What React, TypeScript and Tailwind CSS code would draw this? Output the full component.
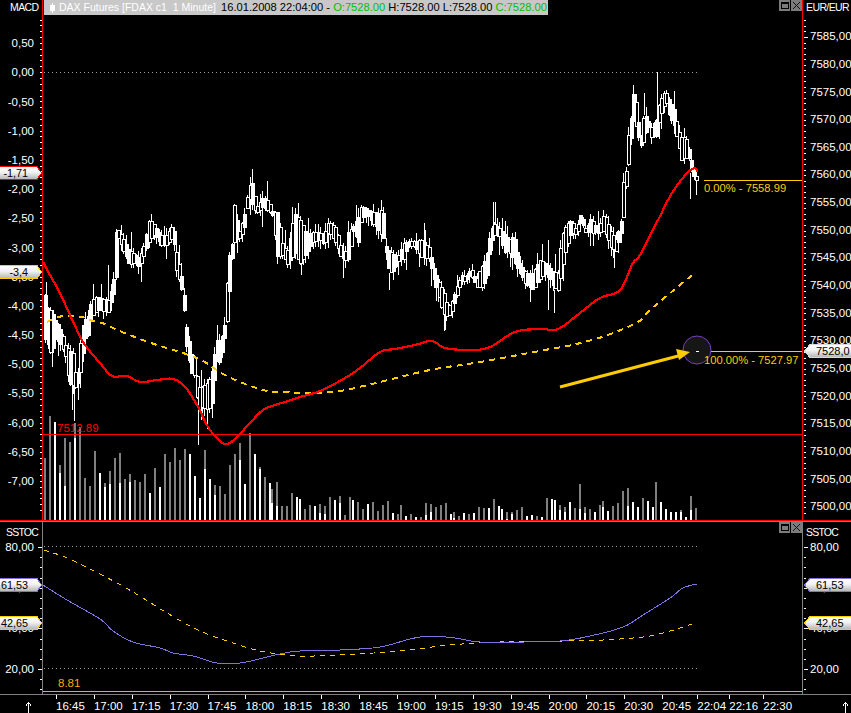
const RED = "#ff0000";

// screen-space points of the indicator curves
const redLine = "43,262 50,275 60,293 70,315 77,330 85,345 100,363 112,376 127,376 140,382 157,380 173,379 185,387 197,405 210,430 225,444 237,437 248,425 263,410 275,405 285,402 300,397 320,391 345,378 360,368 380,352 395,349 415,345 432,341 445,348 470,350 490,347 515,332 541,329 558,329 580,313 600,298 620,290 633,263 640,255 658,220 672,193 687,173 695,168 697,172";
const maLine = "47,322 58,317 70,316 82,317 93,321 105,324 115,329 127,334 148,342 170,349 183,353 203,361 223,374 245,384 267,391 280,392 310,393 340,391 380,382 430,370 480,362 545,350 572,345 605,336 638,322 650,310 680,285 695,273";
const stochK = "43,585 67,600 100,619 113,631 133,642 160,648 173,653 193,656 217,663 240,663 263,658 280,654 300,651 340,650 380,647 410,639 430,636 455,638 480,642 520,642 560,641 590,636 623,627 643,615 670,598 683,588 697,584";
const stochD = "44,550 67,558 100,574 133,592 167,613 200,631 233,643 260,651 280,654 300,656 340,655 400,651 450,645 500,642 560,641 603,640 643,637 667,632 695,623";

// catmull-rom through the read-off points so the curves don't look like straight segments
function smooth(points: string) {
  const p = points.split(" ").map((s) => s.split(",").map(Number));
  const out: string[] = [];
  for (let i = 0; i < p.length - 1; i++) {
    const a = p[Math.max(i - 1, 0)];
    const b = p[i];
    const c = p[i + 1];
    const d = p[Math.min(i + 2, p.length - 1)];
    const steps = Math.max(2, Math.round((c[0] - b[0]) / 2));
    for (let s = 0; s < steps; s++) {
      const t = s / steps;
      const f = (k: number) =>
        0.5 * (2 * b[k] + (c[k] - a[k]) * t + (2 * a[k] - 5 * b[k] + 4 * c[k] - d[k]) * t * t + (3 * b[k] - a[k] - 3 * c[k] + d[k]) * t * t * t);
      out.push(`${f(0).toFixed(1)},${f(1).toFixed(1)}`);
    }
  }
  out.push(p[p.length - 1].join(","));
  return out.join(" ");
}

// x, body top, body bottom read off the chart
const bodyKeys: number[][] = [
  [44, 295, 340], [47, 310, 345], [50, 310, 355], [54, 320, 340], [60, 330, 345], [64, 345, 355], [68, 350, 385], [72, 353, 385], [75, 378, 388], [78, 370, 382], [80, 330, 367], [84, 320, 340], [88, 315, 335], [90, 300, 317], [95, 297, 312], [100, 298, 310], [107, 300, 312], [112, 283, 295], [114, 233, 290], [117, 230, 238], [122, 238, 250], [128, 250, 265], [133, 253, 262], [138, 258, 268], [143, 245, 255], [148, 218, 240], [153, 225, 235], [160, 235, 245], [165, 235, 245], [172, 225, 238], [175, 250, 268], [178, 265, 280], [182, 283, 297], [185, 325, 345], [190, 353, 373], [193, 357, 375], [197, 387, 410], [201, 387, 407], [207, 382, 410], [211, 370, 403], [215, 340, 362], [219, 340, 363], [223, 330, 340],
  [225, 293, 330], [228, 257, 297], [231, 243, 257], [233, 203, 243], [238, 232, 238], [243, 217, 232], [246, 197, 208], [249, 183, 197], [252, 183, 208], [255, 208, 213], [262, 197, 208], [267, 200, 210], [272, 213, 217], [276, 210, 257], [282, 247, 255], [287, 250, 265], [293, 213, 253], [299, 220, 263], [306, 235, 253], [312, 232, 242], [318, 232, 238], [323, 235, 247], [327, 222, 232], [335, 227, 242], [340, 247, 257], [344, 255, 260], [347, 232, 260], [352, 226, 232], [357, 217, 243], [360, 205, 218], [367, 210, 217], [377, 213, 230], [382, 208, 237], [385, 248, 254], [388, 250, 272], [393, 255, 272], [398, 255, 260], [402, 243, 260], [407, 241, 246], [413, 241, 246], [420, 240, 257], [428, 247, 258], [432, 265, 277], [437, 280, 293], [442, 290, 313], [447, 307, 317], [452, 298, 308], [455, 287, 297], [460, 275, 280], [465, 276, 281], [470, 268, 275], [475, 280, 287], [480, 267, 287], [485, 258, 283], [488, 240, 257], [492, 223, 235], [498, 228, 235], [503, 233, 253], [508, 240, 252], [513, 235, 262], [518, 262, 273], [525, 273, 285], [532, 273, 290], [538, 260, 280], [545, 263, 272], [552, 272, 287], [557, 273, 290], [560, 237, 272], [565, 225, 248], [570, 220, 233], [575, 230, 235], [580, 213, 223], [585, 230, 233], [590, 217, 232], [597, 230, 234], [603, 213, 230], [610, 232, 248], [615, 240, 252], [620, 220, 233], [622, 183, 220], [625, 170, 183], [627, 137, 167], [630, 117, 137], [633, 87, 117], [637, 120, 137], [640, 137, 147], [643, 113, 140], [647, 120, 127], [650, 127, 137], [655, 120, 137], [658, 103, 120], [662, 93, 107], [665, 93, 103], [668, 100, 117], [673, 110, 127], [677, 130, 143], [680, 137, 160], [685, 137, 157], [688, 150, 160], [692, 167, 177], [696, 177, 180],
];

// long wicks that stand out in the picture: x, top, bottom
const spikes: number[][] = [
  [46, 282, 320], [52, 320, 367], [72, 385, 410], [74, 370, 421], [108, 265, 300], [198, 380, 445], [201, 370, 420], [252, 169, 190], [301, 263, 275], [389, 273, 290], [438, 290, 302], [445, 310, 330], [425, 230, 250], [493, 202, 230], [495, 202, 225], [548, 240, 310], [554, 290, 313], [614, 250, 268], [633, 85, 95], [644, 93, 115], [657, 72, 120], [690, 173, 199], [692, 161, 177], [696, 177, 195],
];

function interp(x: number, col: number) {
  for (let i = 1; i < bodyKeys.length; i++) {
    if (x <= bodyKeys[i][0]) {
      const a = bodyKeys[i - 1];
      const b = bodyKeys[i];
      return a[col] + ((b[col] - a[col]) * (x - a[0])) / (b[0] - a[0]);
    }
  }
  return bodyKeys[bodyKeys.length - 1][col];
}

function buildCandles() {
  let seed = 1234;
  const rnd = () => {
    seed = (seed * 16807) % 2147483647;
    return seed / 2147483647;
  };
  const wick = () => {
    const r = rnd();
    if (r < 0.45) return rnd() * 3;
    if (r < 0.88) return 3 + rnd() * 6;
    return 10 + rnd() * 10;
  };
  const list = [];
  for (let x = 44; x <= 696; x += 2.525) {
    const top = interp(x, 1);
    const bot = interp(x, 2);
    list.push({
      x: Math.round(x),
      top: Math.round(top),
      h: Math.max(1, Math.round(bot - top)),
      wickTop: Math.round(top - wick()),
      wickBot: Math.round(bot + wick()),
      hollow: rnd() > 0.5,
    });
  }
  return list;
}
const candles = buildCandles();

// volume bars, 5px apart: gray height, white height
const volA: number[][] = [
  [62, 0], [104, 0], [98, 98], [55, 47], [82, 34], [78, 0], [97, 82], [93, 0], [42, 0], [34, 0], [69, 0], [47, 47], [37, 33], [49, 36], [62, 0], [67, 37], [41, 0], [46, 38], [40, 0], [38, 0], [46, 0], [27, 27], [52, 0], [33, 33], [66, 0], [58, 0], [72, 0], [60, 0], [71, 0], [66, 66], [44, 44], [22, 22], [70, 51], [41, 41], [35, 25], [34, 0], [26, 0], [55, 0], [66, 0], [77, 60], [36, 36], [87, 0], [66, 66], [53, 51], [43, 0], [37, 37],
];
// x, gray height, white height
const volB: number[][] = [
  [271, 31, 17], [276, 38, 14], [281, 14, 0], [286, 14, 0], [291, 27, 0], [296, 23, 23], [299, 21, 21], [304, 11, 0], [309, 15, 0], [314, 14, 14], [319, 16, 7], [324, 14, 6], [329, 23, 0], [334, 20, 20], [339, 24, 17], [344, 5, 0], [349, 23, 0], [352, 20, 20], [357, 18, 0], [362, 11, 0], [367, 16, 16], [372, 18, 0], [377, 9, 0], [382, 15, 0], [387, 19, 0], [392, 7, 7], [397, 6, 0], [400, 15, 0], [405, 4, 4], [410, 6, 0], [415, 3, 3], [420, 3, 0], [425, 17, 5], [430, 16, 8], [435, 13, 0], [440, 15, 0], [445, 17, 0], [450, 6, 6], [453, 8, 2], [458, 4, 0], [463, 7, 7], [468, 6, 0], [473, 7, 7], [478, 13, 0], [483, 12, 0], [488, 12, 12], [493, 21, 0], [498, 14, 14], [501, 11, 11], [506, 8, 1], [511, 8, 6], [516, 10, 0], [521, 13, 0], [526, 4, 4], [531, 5, 5], [536, 4, 0], [541, 3, 3], [546, 22, 0], [551, 21, 21], [554, 20, 20], [559, 15, 10], [564, 13, 8], [569, 18, 18], [574, 12, 0], [579, 36, 11], [584, 13, 7], [589, 11, 0], [594, 8, 8], [599, 15, 0], [602, 19, 13], [607, 9, 9], [612, 14, 0], [617, 17, 0], [622, 29, 0], [627, 32, 14], [632, 18, 18], [637, 13, 13], [642, 22, 0], [647, 19, 19], [652, 13, 13], [655, 38, 0], [660, 18, 18], [665, 11, 11], [670, 8, 8], [675, 8, 8], [680, 10, 8], [685, 3, 3], [690, 24, 10], [695, 12, 0],
];
const volumes = [...volA.map((v, i) => [44 + i * 5, v[0], v[1]]), ...volB];

function tickPath(from: number, to: number, major: number, every: number, step: number, x: number, dir: number) {
  let d = "";
  const total = Math.round((to - from) / step);
  for (let i = 0; i <= total; i++) {
    const y = Math.round(from + i * step) + 0.5;
    const isMajor = Math.abs(((from + i * step - major) / step) % every) < 0.01;
    d += `M${x} ${y}h${dir * (isMajor ? 4 : 2)}`;
  }
  return d;
}

function Ticks({ d }: { d: string }) {
  return (
    <svg className="absolute inset-0 h-full w-full pointer-events-none" shapeRendering="crispEdges">
      <path d={d} stroke="#fff" strokeWidth="1" />
    </svg>
  );
}

function Tag({ side, top, color, text }: { side: "left" | "right"; top: number; color: string; text: string }) {
  const left = side === "left";
  return (
    <div
      className={left ? "absolute left-0 h-[14px] w-[42px]" : "absolute right-0 h-[14px] w-[47px]"}
      style={{ top }}
    >
      <svg className="absolute inset-0 h-full w-full" shapeRendering="crispEdges">
        <defs>
          <linearGradient id="tagFill" x1="0" y1="0" x2="0" y2="1">
            <stop offset="0" stopColor="#ffffff" />
            <stop offset="0.45" stopColor="#f2f2f2" />
            <stop offset="1" stopColor="#b4b4b4" />
          </linearGradient>
        </defs>
        <path
          d={left ? "M-2 .5H37L41.5 7 37 13.5H-2Z" : "M60 .5H6L.5 7 6 13.5H60Z"}
          fill="url(#tagFill)"
          stroke={color}
        />
      </svg>
      <span
        className={
          left
            ? "absolute inset-y-0 right-[14px] flex items-center text-[10.8px] text-black"
            : "absolute inset-y-0 left-[12px] flex items-center text-[11px] text-black"
        }
      >
        {text}
      </span>
    </div>
  );
}

function WinButtons() {
  return (
    <div className="absolute right-0 top-0 flex gap-px">
      <div className="flex h-[11px] w-[11px] items-center justify-center bg-[#7c7c7c]">
        <div className="h-[7px] w-[8px] border border-t-2 border-black" />
      </div>
      <div className="h-[11px] w-[11px] bg-[#7c7c7c]">
        <svg viewBox="0 0 11 11" className="block h-[11px] w-[11px]">
          <path d="M2 2l7 7M9 2l-7 7" stroke="#111" strokeWidth="1" fill="none" />
        </svg>
      </div>
    </div>
  );
}

function Label({ children, align, h }: { children: string; align: "left" | "right"; h: string }) {
  return (
    <div className={`flex items-center ${h} ${align === "left" ? "justify-end pr-[8px]" : "pl-[7px]"}`}>
      {children}
    </div>
  );
}

const macdLabels = ["0,50", "0,00", "-0,50", "-1,00", "-1,50", "-2,00", "-2,50", "-3,00", "-3,50", "-4,00", "-4,50", "-5,00", "-5,50", "-6,00", "-6,50", "-7,00"];
const priceLabels = ["7585,00", "7580,00", "7575,00", "7570,00", "7565,00", "7560,00", "7555,00", "7550,00", "7545,00", "7540,00", "7535,00", "7530,00", "7525,00", "7520,00", "7515,00", "7510,00", "7505,00", "7500,00"];
const stochLabels = ["80,00", "60,00", "40,00", "20,00"];

const times = [
  { t: "16:45", w: "w-[37.9px]" }, { t: "17:00", w: "w-[37.9px]" }, { t: "17:15", w: "w-[37.9px]" }, { t: "17:30", w: "w-[37.9px]" },
  { t: "17:45", w: "w-[37.9px]" }, { t: "18:00", w: "w-[37.9px]" }, { t: "18:15", w: "w-[37.9px]" }, { t: "18:30", w: "w-[37.9px]" },
  { t: "18:45", w: "w-[37.9px]" }, { t: "19:00", w: "w-[37.9px]" }, { t: "19:15", w: "w-[37.9px]" }, { t: "19:30", w: "w-[37.9px]" },
  { t: "19:45", w: "w-[37.9px]" }, { t: "20:00", w: "w-[37.9px]" }, { t: "20:15", w: "w-[37.9px]" }, { t: "20:30", w: "w-[37.9px]" },
  { t: "20:45", w: "w-[35px]" }, { t: "22:04", w: "w-[32px]" }, { t: "22:16", w: "w-[34px]" }, { t: "22:30", w: "w-[34px]" },
];

function UpArrow() {
  return (
    <svg width="7" height="11" viewBox="0 0 7 11" shapeRendering="crispEdges" className="block">
      <path d="M3.5 0V11M3.5 0.5L1 3.5M3.5 0.5L6 3.5" stroke="#fff" fill="none" />
    </svg>
  );
}

function MainChart() {
  return (
    <div className="relative flex-1">
      <svg viewBox="43 0 759 520" className="block h-full w-full" shapeRendering="crispEdges">
        <line x1="44" x2="697" y1="72.5" y2="72.5" stroke="#999" strokeDasharray="1 3" />
        {volumes.map((v, i) => (
          <g key={i}>
            <rect x={v[0]} y={520 - v[1]} width="2" height={v[1]} fill="#808080" />
            {v[2] > 0 && <rect x={v[0]} y={520 - v[2]} width="2" height={v[2]} fill="#fff" />}
          </g>
        ))}
        {candles.map((c, i) => (
          <line key={i} x1={c.x + 1.5} x2={c.x + 1.5} y1={c.wickTop} y2={c.wickBot} stroke="#fff" />
        ))}
        {spikes.map((s, i) => (
          <line key={i} x1={s[0] + 0.5} x2={s[0] + 0.5} y1={s[1]} y2={s[2]} stroke="#fff" />
        ))}
        {candles.map((c, i) =>
          c.hollow ? (
            <rect key={i} x={c.x + 0.5} y={c.top + 0.5} width="3" height={c.h} fill="#000" stroke="#fff" />
          ) : (
            <rect key={i} x={c.x} y={c.top} width="4" height={c.h} fill="#fff" />
          )
        )}
        <line x1="43" x2="802" y1="434.5" y2="434.5" stroke={RED} />
        <polyline points={smooth(maLine)} fill="none" stroke="#ffcc00" strokeWidth="2" strokeDasharray="6 5" />
        <polyline points={smooth(redLine)} fill="none" stroke={RED} strokeWidth="2.2" />
        <line x1="704" x2="802" y1="180.5" y2="180.5" stroke="#ffcc00" />
        <line x1="704" x2="802" y1="351.5" y2="351.5" stroke="#ffcc00" />
        <circle cx="697" cy="350" r="14" fill="#161616" stroke="#7a3fc0" shapeRendering="auto" />
        <line x1="696" x2="699" y1="351.5" y2="351.5" stroke="#fff" />
        <g shapeRendering="auto">
          <line x1="560" y1="387" x2="682" y2="355" stroke="#ffcc00" strokeWidth="3" />
          <polygon points="690,352 676,349 679,360" fill="#ffcc00" />
        </g>
      </svg>
      {/* title bar */}
      <div className="absolute left-px top-0 flex h-[15px] w-[504px] items-center whitespace-pre bg-[#c8c8c8] pl-[6px] text-[11.15px] text-black">
        <svg width="5" height="10" viewBox="0 0 5 10" className="mr-[4px] block shrink-0" shapeRendering="crispEdges">
          <rect x="2" width="1" height="10" fill="#fff" />
          <rect y="2" width="5" height="6" fill="#fff" />
        </svg>
        <span className="w-[162px] shrink-0 text-[10.5px] text-white">DAX Futures [FDAX c1  1 Minute]</span>
        <span>16.01.2008 22:04:00 - </span>
        <span className="text-[#00c000]">O:7528.00 </span>
        <span>H:7528.00 L:7528.00 </span>
        <span className="text-[#00c000]">C:7528.00</span>
      </div>
      <WinButtons />
      <span className="absolute left-[14px] top-[423px] text-[#ff0000]">7512.89</span>
      <span className="absolute left-[661px] top-[183px] text-[11.2px] text-[#ffcc00]">0.00% - 7558.99</span>
      <span className="absolute left-[661px] top-[355px] text-[11.2px] text-[#ffcc00]">100.00% - 7527.97</span>
    </div>
  );
}

function StochChart() {
  return (
    <div className="relative flex-1">
      <svg viewBox="43 522 759 172" className="block h-full w-full" shapeRendering="crispEdges">
        <line x1="44" x2="697" y1="546.5" y2="546.5" stroke="#999" strokeDasharray="1 3" />
        <line x1="44" x2="697" y1="668.5" y2="668.5" stroke="#999" strokeDasharray="1 3" />
        <line x1="43" x2="802" y1="691.5" y2="691.5" stroke="#ffa800" />
        <polyline points={smooth(stochD)} fill="none" stroke="#ffcc00" strokeDasharray="5 5" />
        <polyline points={smooth(stochK)} fill="none" stroke="#8470e0" />
      </svg>
      <WinButtons />
      <span className="absolute left-[15px] top-[156px] text-[#ffa800]">8.81</span>
    </div>
  );
}

export default function App() {
  return (
    <div
      className="flex h-[713px] w-[851px] flex-col overflow-hidden bg-black text-[11.5px] leading-none text-white"
      style={{ fontFamily: '"Liberation Sans", sans-serif' }}
    >
      {/* price panel */}
      <div className="flex h-[521px] border-b border-[#ff0000]">
        <div className="relative w-[43px] shrink-0 border-r border-[#ff0000]">
          <div className="flex h-[15px] items-center pl-[10px] text-[10.5px] tracking-[-0.6px]">MACD</div>
          <div className="pt-[14.4px]">
            {macdLabels.map((l) => (
              <Label key={l} align="left" h="h-[29.2px]">{l}</Label>
            ))}
          </div>
          <Ticks d={tickPath(19.6, 513, 44, 5, 5.84, 42, -1)} />
          <Tag side="left" top={166} color="#ff0000" text="-1,71" />
          <Tag side="left" top={265} color="#ffcc00" text="-3,4" />
        </div>
        <MainChart />
        <div className="relative w-[49px] shrink-0 border-l border-[#ff0000]">
          <div className="flex h-[15px] items-center pl-[3px] text-[10.5px] tracking-[-0.6px]">EUR/EUR</div>
          <div className="pt-[8.2px]">
            {priceLabels.map((l) => (
              <Label key={l} align="right" h="h-[27.65px]">{l}</Label>
            ))}
          </div>
          <Ticks d={tickPath(20.4, 515, 37, 5, 5.53, 1, 1)} />
          <Tag side="right" top={344} color="#d8d8d8" text="7528,0" />
        </div>
      </div>
      {/* stochastic panel */}
      <div className="flex h-[174px] border-y border-[#808080]">
        <div className="relative w-[43px] shrink-0 border-r border-[#808080]">
          <div className="flex h-[19px] items-center pl-[6px] pt-[2px] text-[10.5px] tracking-[-0.8px]">SSTOC</div>
          <div className="mt-[-14px]">
            {stochLabels.map((l) => (
              <Label key={l} align="left" h="h-[40.67px]">{l}</Label>
            ))}
          </div>
          <Ticks d={tickPath(25, 168, 25, 4, 10.17, 42, -1)} />
          <Tag side="left" top={56} color="#8470e0" text="61,53" />
          <Tag side="left" top={94} color="#ffcc00" text="42,65" />
        </div>
        <StochChart />
        <div className="relative w-[49px] shrink-0 border-l border-[#808080]">
          <div className="flex h-[19px] items-center pl-[3px] pt-[2px] text-[10.5px] tracking-[-0.8px]">SSTOC</div>
          <div className="mt-[-14px]">
            {stochLabels.map((l) => (
              <Label key={l} align="right" h="h-[40.67px]">{l}</Label>
            ))}
          </div>
          <Ticks d={tickPath(25, 168, 25, 4, 10.17, 1, 1)} />
          <Tag side="right" top={56} color="#8470e0" text="61,53" />
          <Tag side="right" top={94} color="#ffcc00" text="42,65" />
        </div>
      </div>
      {/* time axis */}
      <div className="flex flex-1">
        <div className="w-[56px] shrink-0 pl-[25px] pt-[7px]">
          <UpArrow />
        </div>
        {times.map((c) => (
          <div key={c.t} className={`${c.w} shrink-0`}>
            <div className="h-[4px] w-px bg-white" />
            <div className="pt-[2px] whitespace-nowrap">{c.t}</div>
          </div>
        ))}
        <div className="ml-auto pr-[2px] pt-[7px]">
          <UpArrow />
        </div>
      </div>
    </div>
  );
}
